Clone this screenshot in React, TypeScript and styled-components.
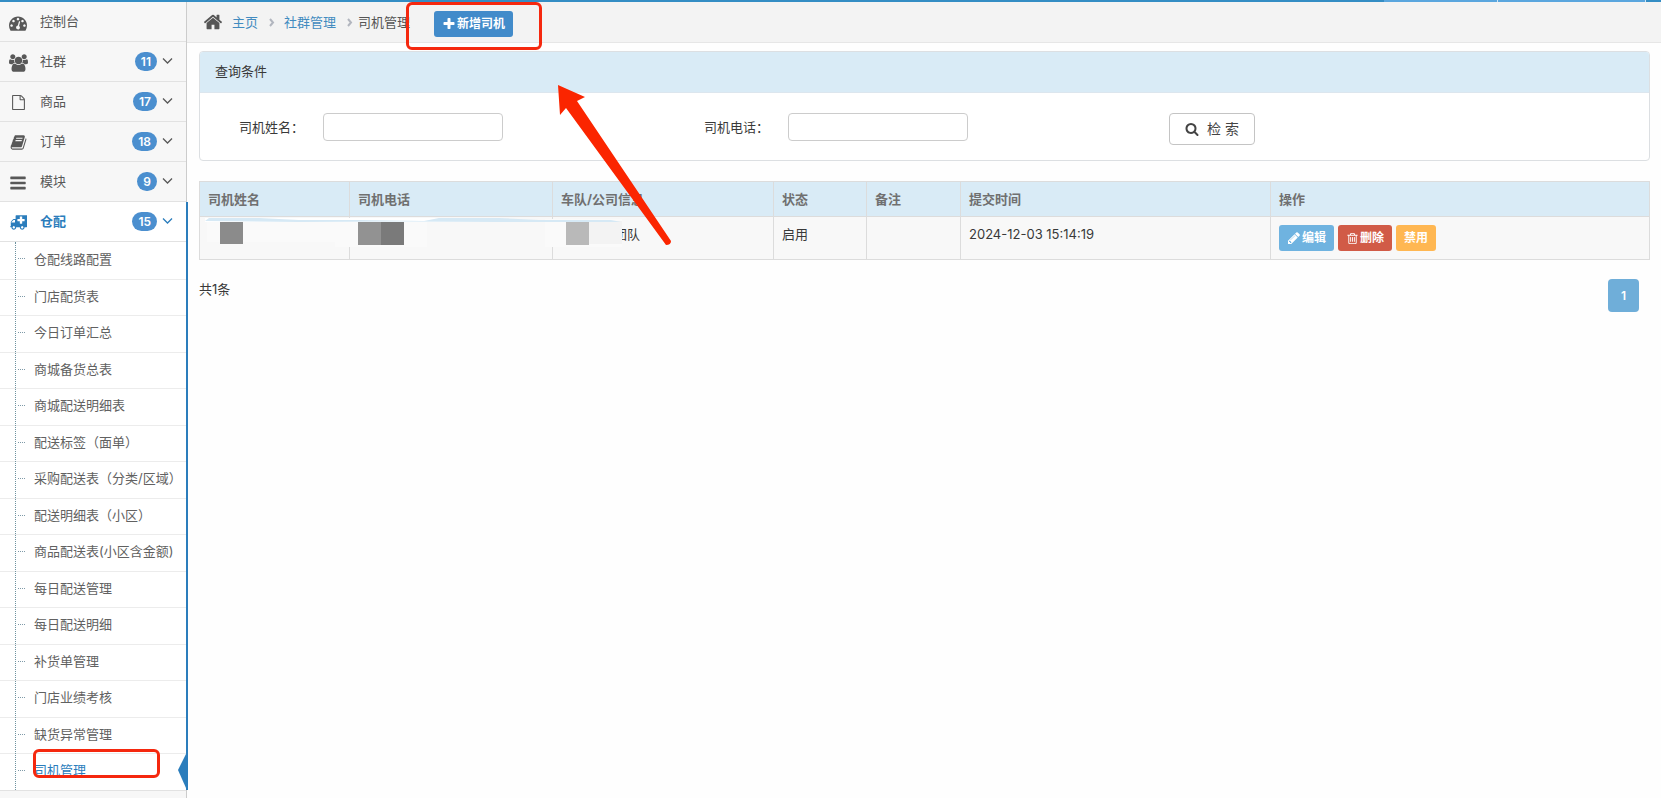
import React from "react";
import styled, { createGlobalStyle, css } from "styled-components";

const GlobalStyle = createGlobalStyle`
  *, *::before, *::after { box-sizing: border-box; }
  body {
    margin: 0;
    background: #fefefe;
    color: #393939;
    font: 13px/20px Inter, "Noto Sans CJK SC", sans-serif;
  }
  button, input { font: inherit; }
  a { color: inherit; text-decoration: none; }
  ul, ol { list-style: none; margin: 0; padding: 0; }
`;

const icons = {
  dashboard: {
    w: 1792,
    d: "M384 1152q0-53-37.5-90.5t-90.5-37.5-90.5 37.5-37.5 90.5 37.5 90.5 90.5 37.5 90.5-37.5 37.5-90.5zm192-448q0-53-37.5-90.5t-90.5-37.5-90.5 37.5-37.5 90.5 37.5 90.5 90.5 37.5 90.5-37.5 37.5-90.5zm428 481l101-382q6-26-7.5-48.5t-38.5-29.5-48 6.5-30 39.5l-101 382q-60 5-107 43.5t-63 98.5q-20 77 20 146t117 89 146-20 89-117q16-60-6-117t-72-91zm660-33q0-53-37.5-90.5t-90.5-37.5-90.5 37.5-37.5 90.5 37.5 90.5 90.5 37.5 90.5-37.5 37.5-90.5zm-640-640q0-53-37.5-90.5t-90.5-37.5-90.5 37.5-37.5 90.5 37.5 90.5 90.5 37.5 90.5-37.5 37.5-90.5zm448 192q0-53-37.5-90.5t-90.5-37.5-90.5 37.5-37.5 90.5 37.5 90.5 90.5 37.5 90.5-37.5 37.5-90.5zm320 448q0 261-141 483-19 29-54 29h-1402q-35 0-54-29-141-221-141-483 0-182 71-348t191-286 286-191 348-71 348 71 286 191 191 286 71 348z",
  },
  users: {
    w: 1920,
    d: "M593 896q-162 5-265 128h-134q-82 0-138-40.5t-56-118.5q0-353 124-353 6 0 43.5 21t97.5 42.5 119 21.5q67 0 133-23-5 37-5 66 0 139 81 256zm1071 637q0 120-73 189.5t-194 69.5h-874q-121 0-194-69.5t-73-189.5q0-53 3.5-103.5t14-109 26.5-108.5 43-97.5 62-81 85.5-53.5 111.5-20q10 0 43 21.5t73 48 107 48 135 21.5 135-21.5 107-48 73-48 43-21.5q61 0 111.5 20t85.5 53.5 62 81 43 97.5 26.5 108.5 14 109 3.5 103.5zm-1024-1277q0 106-75 181t-181 75-181-75-75-181 75-181 181-75 181 75 75 181zm704 384q0 159-112.5 271.5t-271.5 112.5-271.5-112.5-112.5-271.5 112.5-271.5 271.5-112.5 271.5 112.5 112.5 271.5zm576 225q0 78-56 118.5t-138 40.5h-134q-103-123-265-128 81-117 81-256 0-29-5-66 66 23 133 23 59 0 119-21.5t97.5-42.5 43.5-21q124 0 124 353zm-128-609q0 106-75 181t-181 75-181-75-75-181 75-181 181-75 181 75 75 181z",
  },
  file: {
    w: 1792,
    d: "M1596 380q28 28 48 76t20 88v1152q0 40-28 68t-68 28h-1344q-40 0-68-28t-28-68v-1600q0-40 28-68t68-28h896q40 0 88 20t76 48zm-444-244v376h376q-10-29-22-41l-313-313q-12-12-41-22zm384 1528v-1024h-416q-40 0-68-28t-28-68v-416h-768v1536h1280z",
  },
  book: {
    w: 1792,
    d: "M1703 478q40 57 18 129l-275 906q-19 64-76.5 107.5t-122.5 43.5h-923q-77 0-148.5-53.5t-99.5-131.5q-24-67-2-127 0-4 3-27t4-37q1-8-3-21.5t-3-19.5q2-11 8-21t16.5-23.5 16.5-23.5q23-38 45-91.5t30-91.5q3-10 .5-30t-.5-28q3-11 17-28t17-23q21-36 42-92t25-90q1-9-2.5-32t.5-28q4-13 22-30.5t22-22.5q19-26 42.5-84.5t27.5-96.5q1-8-3-25.5t-2-26.5q2-8 9-18t18-23 17-21q8-12 16.5-30.5t15-35 16-36 19.5-32 26.5-23.5 36-11.5 47.5 5.5l-1 3q38-9 51-9h761q74 0 114 56t18 130l-274 906q-36 119-71.5 153.5t-128.5 34.5h-869q-27 0-38 15-11 16-1 43 24 70 144 70h923q29 0 56-15.5t35-41.5l300-987q7-22 5-57 38 15 59 43zm-1064 2q-4 13 2 22.5t20 9.5h608q13 0 25.5-9.5t16.5-22.5l21-64q4-13-2-22.5t-20-9.5h-608q-13 0-25.5 9.5t-16.5 22.5zm-83 256q-4 13 2 22.5t20 9.5h608q13 0 25.5-9.5t16.5-22.5l21-64q4-13-2-22.5t-20-9.5h-608q-13 0-25.5 9.5t-16.5 22.5z",
  },
  bars: {
    w: 1792,
    d: "M1664 1344v128q0 26-19 45t-45 19h-1408q-26 0-45-19t-19-45v-128q0-26 19-45t45-19h1408q26 0 45 19t19 45zm0-512v128q0 26-19 45t-45 19h-1408q-26 0-45-19t-19-45v-128q0-26 19-45t45-19h1408q26 0 45 19t19 45zm0-512v128q0 26-19 45t-45 19h-1408q-26 0-45-19t-19-45v-128q0-26 19-45t45-19h1408q26 0 45 19t19 45z",
  },
  ambulance: {
    w: 1920,
    d: "M640 1408q0-52-38-90t-90-38-90 38-38 90 38 90 90 38 90-38 38-90zM256 896h384v-256h-158q-14 2-22 9l-195 195q-7 12-9 22zM1536 1408q0-52-38-90t-90-38-90 38-38 90 38 90 90 38 90-38 38-90zM1664 736v-192q0-14-9-23t-23-9h-224v-224q0-14-9-23t-23-9h-192q-14 0-23 9t-9 23v224h-224q-14 0-23 9t-9 23v192q0 14 9 23t23 9h224v224q0 14 9 23t23 9h192q14 0 23-9t9-23v-224h224q14 0 23-9t9-23zM1920 192v1152q0 26-19 45t-45 19h-192q0 106-75 181t-181 75-181-75-75-181h-384q0 106-75 181t-181 75-181-75-75-181h-64q-26 0-45-19t-19-45 19-45 45-19v-416q0-26 13-58t32-51l198-198q19-19 51-32t58-13h160v-320q0-26 19-45t45-19h1152q26 0 45 19t19 45z",
  },
  home: {
    w: 1792,
    d: "M1472 992v480q0 26-19 45t-45 19h-384v-384h-256v384h-384q-26 0-45-19t-19-45v-480q0-1 .5-3t.5-3l575-474 575 474q1 2 1 6zm223-69l-62 74q-8 9-21 11h-3q-13 0-21-7l-692-577-692 577q-12 8-24 7-13-2-21-11l-62-74q-8-10-7-23.5t11-21.5l719-599q32-26 76-26t76 26l244 204v-195q0-14 9-23t23-9h192q14 0 23 9t9 23v408l219 182q10 8 11 21.5t-7 23.5z",
  },
  plus: {
    w: 1792,
    d: "M1600 736v192q0 40-28 68t-68 28h-416v416q0 40-28 68t-68 28h-192q-40 0-68-28t-28-68v-416h-416q-40 0-68-28t-28-68v-192q0-40 28-68t68-28h416v-416q0-40 28-68t68-28h192q40 0 68 28t28 68v416h416q40 0 68 28t28 68z",
  },
  search: {
    w: 1792,
    d: "M1216 832q0-185-131.5-316.5t-316.5-131.5-316.5 131.5-131.5 316.5 131.5 316.5 316.5 131.5 316.5-131.5 131.5-316.5zm512 832q0 52-38 90t-90 38q-54 0-90-38l-343-342q-179 124-399 124-143 0-273.5-55.5t-225-150-150-225-55.5-273.5 55.5-273.5 150-225 225-150 273.5-55.5 273.5 55.5 225 150 150 225 55.5 273.5q0 220-124 399l343 343q37 37 37 90z",
  },
  pencil: {
    w: 1792,
    d: "M491 1536l91-91-235-235-91 91v107h128v128h107zm523-928q0-22-22-22-10 0-17 7l-542 542q-7 7-7 17 0 22 22 22 10 0 17-7l542-542q7-7 7-17zm-54-192l416 416-832 832h-416v-416zm683 96q0 53-37 90l-166 166-416-416 166-165q36-38 90-38 53 0 91 38l235 234q37 39 37 91z",
  },
  trash: {
    w: 1792,
    d: "M704 736v576q0 14-9 23t-23 9h-64q-14 0-23-9t-9-23v-576q0-14 9-23t23-9h64q14 0 23 9t9 23zm256 0v576q0 14-9 23t-23 9h-64q-14 0-23-9t-9-23v-576q0-14 9-23t23-9h64q14 0 23 9t9 23zm256 0v576q0 14-9 23t-23 9h-64q-14 0-23-9t-9-23v-576q0-14 9-23t23-9h64q14 0 23 9t9 23zm128 724v-948h-896v948q0 22 7 40.5t14.5 27 10.5 8.5h832q3 0 10.5-8.5t14.5-27 7-40.5zm-672-1076h448l-48-117q-7-9-17-11h-317q-10 2-17 11zm928 32v64q0 14-9 23t-23 9h-96v948q0 83-47 143.5t-113 60.5h-832q-66 0-113-58.5t-47-141.5v-952h-96q-14 0-23-9t-9-23v-64q0-14 9-23t23-9h309l70-167q15-37 54-63t79-26h320q40 0 79 26t54 63l70 167h309q14 0 23 9t9 23z",
  },
};
type IconName = keyof typeof icons;

const Svg = styled.svg`
  display: block;
  flex: none;
  fill: currentColor;
  fill-rule: evenodd;
`;

function Icon({ name, size }: { name: IconName; size: number }) {
  const { w, d } = icons[name];
  return (
    <Svg width={Math.round((size * w) / 1792)} height={size} viewBox={`0 0 ${w} 1792`} aria-hidden>
      <path d={d} />
    </Svg>
  );
}

const Page = styled.div`
  min-height: 100vh;
  display: flex;
  flex-direction: column;
`;

const TopStrip = styled.header`
  display: flex;
  justify-content: flex-end;
  gap: 1px;
  height: 2px;
  padding-right: 16px;
  background: #348dc4;
`;

const TopSegment = styled.span<{ $width: number }>`
  width: ${(p) => p.$width}px;
  background: #5aa6de;
  box-shadow: 1px 0 #cfe5f5;
`;

const Body = styled.div`
  flex: 1;
  display: flex;
`;

const Sidebar = styled.nav`
  position: relative;
  flex: none;
  width: 187px;
  background: #f7f7f7;
  border-right: 1px solid #ccc;
`;

const MenuItem = styled.li<{ $open?: boolean }>`
  border-bottom: 1px solid #e2e2e2;
  ${(p) =>
    p.$open &&
    css`
      position: relative;
      background: #fff;
      &::after {
        content: "";
        position: absolute;
        top: 0;
        bottom: 0;
        right: -2px;
        width: 2px;
        background: #2b7dbc;
      }
    `}
`;

const MenuLink = styled.a<{ $open?: boolean }>`
  display: flex;
  align-items: center;
  height: 39px;
  padding: 0 13px 1px 8px;
  color: ${(p) => (p.$open ? "#2b7dbc" : "#585858")};
  font-weight: ${(p) => (p.$open ? 700 : 400)};
`;

const MenuIcon = styled.span`
  display: flex;
  justify-content: center;
  width: 20px;
  margin-right: 12px;
  padding-top: 3px;
`;

const Badge = styled.span`
  margin-left: auto;
  padding: 0 6px;
  min-width: 19px;
  border-radius: 10px;
  background: #4b8fcf;
  color: #fff;
  font-size: 12px;
  line-height: 19px;
  font-weight: 600;
  text-align: center;
`;

const Chevron = styled.svg`
  margin-left: 5px;
  fill: none;
  stroke: currentColor;
`;

const SubList = styled.ul`
  position: relative;
  border-top: 1px solid #e2e2e2;
  &::before {
    content: "";
    position: absolute;
    top: 0;
    bottom: 0;
    left: 15px;
    border-left: 1px dotted #6f93a0;
  }
`;

const SubItem = styled.li`
  height: 36px;
  & + & { border-top: 1px solid #ececec; }
  &:nth-child(odd) { height: 37px; }
`;

const SubLink = styled.a<{ $active?: boolean }>`
  position: relative;
  display: flex;
  align-items: center;
  height: 100%;
  padding: 0 0 4px 34px;
  white-space: nowrap;
  color: ${(p) => (p.$active ? "#2b7dbc" : "#616161")};
  &::before {
    content: "";
    position: absolute;
    left: 18px;
    top: 16px;
    width: 7px;
    border-top: 1px dotted #7f9aa8;
  }
`;

const ActiveMark = styled.svg`
  position: absolute;
  right: 0;
  bottom: 2px;
  fill: #2b7dbc;
`;

const RedFrame = styled.span`
  position: absolute;
  border: 3px solid #f5280e;
  border-radius: 6px;
  pointer-events: none;
`;

const SubFrame = styled(RedFrame)`
  left: 33px;
  right: 26px;
  bottom: 12px;
  height: 29px;
`;

const Main = styled.main`
  flex: 1;
  min-width: 0;
`;

const CrumbBar = styled.div`
  display: flex;
  align-items: center;
  height: 41px;
  padding-left: 16px;
  background: #f3f3f3;
  border-bottom: 1px solid #e6e6e6;
`;

const Crumbs = styled.ol`
  display: flex;
  align-items: center;
  color: #555;
  li { display: flex; align-items: center; }
  a { padding-left: 4px; color: #428bc0; }
`;

const HomeIcon = styled.span`
  margin-right: 5px;
`;

const Separator = styled.svg`
  margin: 0 3px 0 9px;
  fill: none;
  stroke: #b2b6bf;
  stroke-width: 2;
`;

const AddWrap = styled.div`
  position: relative;
  margin-left: 24px;
  padding-top: 4px;
`;

const AddFrame = styled(RedFrame)`
  top: -5px;
  bottom: -13px;
  left: -28px;
  right: -29px;
`;

const tones = {
  primary: "#428bca",
  info: "#6fb3e0",
  danger: "#d15b47",
  warning: "#ffb752",
};

const SmallButton = styled.button<{ $tone: keyof typeof tones }>`
  display: flex;
  align-items: center;
  gap: 1px;
  height: 26px;
  padding: 0 8px;
  border: 0;
  border-radius: 3px;
  background: ${(p) => tones[p.$tone]};
  color: #fff;
  font-size: 12px;
  font-weight: 700;
  white-space: nowrap;
`;

const Content = styled.div`
  padding: 8px 11px 20px 12px;
`;

const Panel = styled.section`
  border: 1px solid #dcdfe2;
  border-radius: 4px;
  overflow: hidden;
  background: #fff;
`;

const PanelHeading = styled.h2`
  margin: 0;
  padding: 9px 15px 11px;
  background: #d9ebf6;
  border-bottom: 1px solid #dce6ee;
  font-size: 13px;
  font-weight: 400;
`;

const SearchForm = styled.form`
  display: grid;
  grid-template-columns: repeat(3, 1fr);
  align-items: start;
  padding: 20px 15px 15px 39px;
`;

const Field = styled.label`
  display: flex;
  align-items: center;
  height: 28px;
`;

const FieldName = styled.span`
  width: 84px;
`;

const TextInput = styled.input`
  width: 180px;
  height: 28px;
  padding: 4px 6px;
  border: 1px solid #ccc;
  border-radius: 4px;
  background: #fff;
`;

const SearchButton = styled.button`
  display: flex;
  align-items: center;
  justify-content: center;
  gap: 8px;
  justify-self: start;
  width: 86px;
  height: 32px;
  border: 1px solid #c4c4c4;
  border-radius: 4px;
  background: #fff;
  color: #444;
  font-size: 14px;
`;

const TableWrap = styled.div`
  position: relative;
  margin-top: 20px;
`;

const Table = styled.table`
  width: 100%;
  table-layout: fixed;
  border-collapse: collapse;
  th, td {
    padding: 8px;
    border: 1px solid #dcdcdc;
    text-align: left;
    vertical-align: top;
    line-height: 18px;
  }
  th { background: #d9ebf6; color: #707070; font-weight: 700; }
  td { background: #f8f8f8; }
`;

const Col = styled.col<{ $width?: number }>`
  width: ${(p) => (p.$width ? `${p.$width}px` : "auto")};
`;

const Actions = styled.div`
  display: flex;
  gap: 4px;
`;

const Fleet = styled.span`
  padding-left: 53px;
`;

const Overlay = styled.svg`
  position: absolute;
  pointer-events: none;
`;

const Mosaic = styled(Overlay)`
  left: 0;
  top: 36px;
`;

const Arrow = styled(Overlay)`
  left: 350px;
  top: -100px;
`;

const Footer = styled.footer`
  display: flex;
  justify-content: space-between;
  align-items: flex-start;
  padding: 19px 11px 0 0;
`;

const PageButton = styled.button`
  width: 31px;
  height: 33px;
  border: 0;
  border-radius: 4px;
  background: #6faed9;
  color: #fff;
  font-size: 12px;
  font-weight: 600;
`;

const menu: { icon: IconName; size: number; label: string; count?: number; open?: boolean }[] = [
  { icon: "dashboard", size: 18, label: "控制台" },
  { icon: "users", size: 18, label: "社群", count: 11 },
  { icon: "file", size: 15, label: "商品", count: 17 },
  { icon: "book", size: 17, label: "订单", count: 18 },
  { icon: "bars", size: 18, label: "模块", count: 9 },
  { icon: "ambulance", size: 17, label: "仓配", count: 15, open: true },
];

const subMenu = [
  "仓配线路配置",
  "门店配货表",
  "今日订单汇总",
  "商城备货总表",
  "商城配送明细表",
  "配送标签（面单）",
  "采购配送表（分类/区域）",
  "配送明细表（小区）",
  "商品配送表(小区含金额)",
  "每日配送管理",
  "每日配送明细",
  "补货单管理",
  "门店业绩考核",
  "缺货异常管理",
  "司机管理",
];

const columns: { title: string; width?: number }[] = [
  { title: "司机姓名", width: 150 },
  { title: "司机电话", width: 203 },
  { title: "车队/公司信息", width: 221 },
  { title: "状态", width: 93 },
  { title: "备注", width: 94 },
  { title: "提交时间", width: 310 },
  { title: "操作" },
];

function SubMenu() {
  return (
    <SubList>
      {subMenu.map((label, i) => {
        const active = i === subMenu.length - 1;
        return (
          <SubItem key={label}>
            <SubLink href="#" $active={active} aria-current={active ? "page" : undefined}>
              {label}
              {active && (
                <>
                  <ActiveMark width="8" height="34" viewBox="0 0 8 34" aria-hidden>
                    <path d="M8 0L0 16L8 34Z" />
                  </ActiveMark>
                  <SubFrame />
                </>
              )}
            </SubLink>
          </SubItem>
        );
      })}
    </SubList>
  );
}

function CrumbArrow() {
  return (
    <Separator width="10" height="10" viewBox="0 0 10 10" aria-hidden>
      <path d="M3 2L6 5.500L3 9" />
    </Separator>
  );
}

export default function App() {
  return (
    <Page>
      <GlobalStyle />
      <TopStrip>
        <TopSegment $width={113} />
        <TopSegment $width={147} />
      </TopStrip>
      <Body>
        <Sidebar>
          <ul>
            {menu.map((m) => (
              <MenuItem key={m.label} $open={m.open}>
                <MenuLink href="#" $open={m.open}>
                  <MenuIcon>
                    <Icon name={m.icon} size={m.size} />
                  </MenuIcon>
                  {m.label}
                  {m.count !== undefined && (
                    <>
                      <Badge>{m.count}</Badge>
                      <Chevron width="11" height="8" viewBox="0 0 11 8" strokeWidth="1.3" aria-hidden>
                        <path d="M1 1.5L5.500 6L10 1.500" />
                      </Chevron>
                    </>
                  )}
                </MenuLink>
                {m.open && <SubMenu />}
              </MenuItem>
            ))}
          </ul>
        </Sidebar>
        <Main>
          <CrumbBar>
            <Crumbs>
              <li>
                <HomeIcon>
                  <Icon name="home" size={20} />
                </HomeIcon>
                <a href="#">主页</a>
              </li>
              <li>
                <CrumbArrow />
                <a href="#">社群管理</a>
              </li>
              <li>
                <CrumbArrow />
                司机管理
              </li>
            </Crumbs>
            <AddWrap>
              <SmallButton type="button" $tone="primary">
                <Icon name="plus" size={14} />
                新增司机
              </SmallButton>
              <AddFrame />
            </AddWrap>
          </CrumbBar>
          <Content>
            <Panel>
              <PanelHeading>查询条件</PanelHeading>
              <SearchForm onSubmit={(e) => e.preventDefault()}>
                <Field>
                  <FieldName>司机姓名：</FieldName>
                  <TextInput type="text" name="name" />
                </Field>
                <Field>
                  <FieldName>司机电话：</FieldName>
                  <TextInput type="text" name="phone" />
                </Field>
                <SearchButton type="submit">
                  <Icon name="search" size={14} />
                  检 索
                </SearchButton>
              </SearchForm>
            </Panel>
            <TableWrap>
              <Table>
                <colgroup>
                  {columns.map((c) => (
                    <Col key={c.title} $width={c.width} />
                  ))}
                </colgroup>
                <thead>
                  <tr>
                    {columns.map((c) => (
                      <th key={c.title} scope="col">
                        {c.title}
                      </th>
                    ))}
                  </tr>
                </thead>
                <tbody>
                  <tr>
                    <td />
                    <td />
                    <td>
                      <Fleet>团队</Fleet>
                    </td>
                    <td>启用</td>
                    <td />
                    <td>2024-12-03 15:14:19</td>
                    <td>
                      <Actions>
                        <SmallButton type="button" $tone="info">
                          <Icon name="pencil" size={14} />
                          编辑
                        </SmallButton>
                        <SmallButton type="button" $tone="danger">
                          <Icon name="trash" size={13} />
                          删除
                        </SmallButton>
                        <SmallButton type="button" $tone="warning">
                          禁用
                        </SmallButton>
                      </Actions>
                    </td>
                  </tr>
                </tbody>
              </Table>
              <Mosaic width="450" height="34" viewBox="0 0 450 34" aria-hidden>
                <path fill="#fafafa" d="M8 2H136V25H8ZM136 2H228V30H136ZM346 2H423V30H346Z" />
                <path fill="#f3f3f3" d="M390 4H423V27H390Z" />
                <path fill="#fff" d="M6 1H300V5H6Z" />
                <path fill="#d6e9f5" d="M10 1L60 1L100 3L160 3L225 4L240 1H300L340 3H412L422 5H300L200 4.500L100 5L6 4Z" />
                <path fill="#8b8b8b" d="M21 5H44V27H21Z" />
                <path fill="#929292" d="M159 5H182V28H159Z" />
                <path fill="#7a7a7a" d="M182 5H205V28H182Z" />
                <path fill="#b9b9b9" d="M367 5H390V28H367Z" />
              </Mosaic>
              <Arrow width="130" height="170" viewBox="0 0 130 170" aria-hidden>
                <path fill="#fb2500" d="M9 4L36 16L28 20L122 160Q122 164 117 164L17 27L11 34Z" />
              </Arrow>
            </TableWrap>
            <Footer>
              <span>共1条</span>
              <PageButton type="button">1</PageButton>
            </Footer>
          </Content>
        </Main>
      </Body>
    </Page>
  );
}
